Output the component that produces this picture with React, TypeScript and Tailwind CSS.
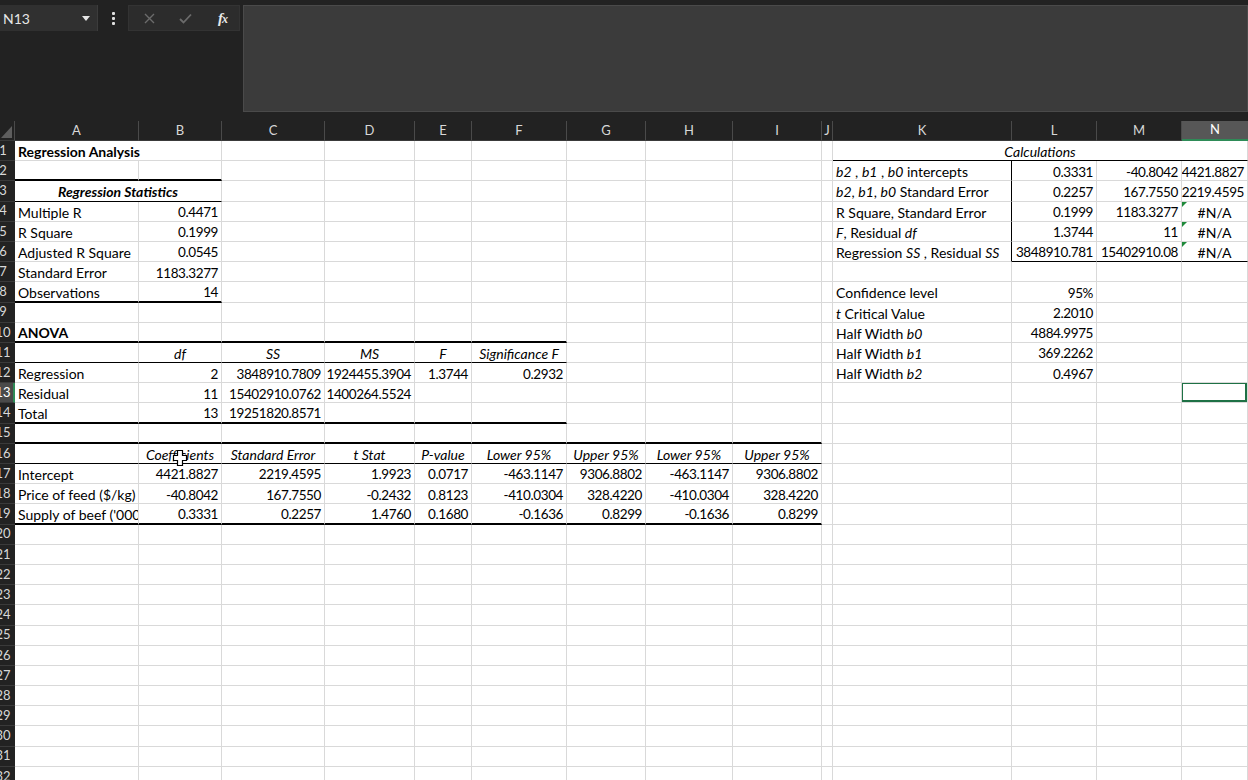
import { ReactNode } from 'react';

type Cell = {
  c: ReactNode;
  a?: 'l' | 'r' | 'c';
  span?: number;
  b?: boolean;
  i?: boolean;
  n?: boolean;
};

const COLS = [15, 124, 83, 103, 90, 57, 95, 79, 87, 89, 11, 179, 85, 85, 66];
const LETTERS = ['', 'A', 'B', 'C', 'D', 'E', 'F', 'G', 'H', 'I', 'J', 'K', 'L', 'M', 'N'];
const ROW_COUNT = 32;

const it = (s: string) => <i>{s}</i>;

const num = (c: string): Cell => ({ c, a: 'r', n: true });
const head = (c: string): Cell => ({ c, a: 'c', i: true });

// cells keyed "row-col" (col 1 = A)
const CELLS: Record<string, Cell> = {
  '1-1': { c: 'Regression Analysis', b: true, span: 2 },
  '3-1': { c: 'Regression Statistics', b: true, i: true, a: 'c', span: 2 },
  '4-1': { c: 'Multiple R' },
  '4-2': num('0.4471'),
  '5-1': { c: 'R Square' },
  '5-2': num('0.1999'),
  '6-1': { c: 'Adjusted R Square' },
  '6-2': num('0.0545'),
  '7-1': { c: 'Standard Error' },
  '7-2': num('1183.3277'),
  '8-1': { c: 'Observations' },
  '8-2': num('14'),
  '10-1': { c: 'ANOVA', b: true },
  '11-2': head('df'),
  '11-3': head('SS'),
  '11-4': head('MS'),
  '11-5': head('F'),
  '11-6': head('Significance F'),
  '12-1': { c: 'Regression' },
  '12-2': num('2'),
  '12-3': num('3848910.7809'),
  '12-4': num('1924455.3904'),
  '12-5': num('1.3744'),
  '12-6': num('0.2932'),
  '13-1': { c: 'Residual' },
  '13-2': num('11'),
  '13-3': num('15402910.0762'),
  '13-4': num('1400264.5524'),
  '14-1': { c: 'Total' },
  '14-2': num('13'),
  '14-3': num('19251820.8571'),
  '16-2': head('Coefficients'),
  '16-3': head('Standard Error'),
  '16-4': head('t Stat'),
  '16-5': head('P-value'),
  '16-6': head('Lower 95%'),
  '16-7': head('Upper 95%'),
  '16-8': head('Lower 95%'),
  '16-9': head('Upper 95%'),
  '17-1': { c: 'Intercept' },
  '17-2': num('4421.8827'),
  '17-3': num('2219.4595'),
  '17-4': num('1.9923'),
  '17-5': num('0.0717'),
  '17-6': num('-463.1147'),
  '17-7': num('9306.8802'),
  '17-8': num('-463.1147'),
  '17-9': num('9306.8802'),
  '18-1': { c: 'Price of feed ($/kg)' },
  '18-2': num('-40.8042'),
  '18-3': num('167.7550'),
  '18-4': num('-0.2432'),
  '18-5': num('0.8123'),
  '18-6': num('-410.0304'),
  '18-7': num('328.4220'),
  '18-8': num('-410.0304'),
  '18-9': num('328.4220'),
  '19-1': { c: "Supply of beef ('000" },
  '19-2': num('0.3331'),
  '19-3': num('0.2257'),
  '19-4': num('1.4760'),
  '19-5': num('0.1680'),
  '19-6': num('-0.1636'),
  '19-7': num('0.8299'),
  '19-8': num('-0.1636'),
  '19-9': num('0.8299'),

  '1-11': { c: 'Calculations', i: true, a: 'c', span: 4 },
  '2-11': { c: <>{it('b2')} , {it('b1')} , {it('b0')} intercepts</> },
  '2-12': num('0.3331'),
  '2-13': num('-40.8042'),
  '2-14': num('4421.8827'),
  '3-11': { c: <>{it('b2')}, {it('b1')}, {it('b0')} Standard Error</> },
  '3-12': num('0.2257'),
  '3-13': num('167.7550'),
  '3-14': num('2219.4595'),
  '4-11': { c: 'R Square, Standard Error' },
  '4-12': num('0.1999'),
  '4-13': num('1183.3277'),
  '4-14': { c: '#N/A', a: 'c' },
  '5-11': { c: <>{it('F')}, Residual {it('df')}</> },
  '5-12': num('1.3744'),
  '5-13': num('11'),
  '5-14': { c: '#N/A', a: 'c' },
  '6-11': { c: <>Regression {it('SS')} , Residual {it('SS')}</> },
  '6-12': num('3848910.781'),
  '6-13': num('15402910.08'),
  '6-14': { c: '#N/A', a: 'c' },
  '8-11': { c: 'Confidence level' },
  '8-12': num('95%'),
  '9-11': { c: <>{it('t')} Critical Value</> },
  '9-12': num('2.2010'),
  '10-11': { c: <>Half Width {it('b0')}</> },
  '10-12': num('4884.9975'),
  '11-11': { c: <>Half Width {it('b1')}</> },
  '11-12': num('369.2262'),
  '12-11': { c: <>Half Width {it('b2')}</> },
  '12-12': num('0.4967'),
};

const inRange = (c: number, a: number, b: number) => c >= a && c <= b;

function bottomClass(r: number, c: number) {
  const thick = 'border-b-2 border-b-black';
  const thin = 'border-b border-b-black';
  if ((r === 2 || r === 8) && inRange(c, 1, 2)) return thick;
  if (r === 3 && inRange(c, 1, 2)) return thin;
  if ((r === 10 || r === 14) && inRange(c, 1, 6)) return thick;
  if (r === 11 && inRange(c, 1, 6)) return thin;
  if ((r === 15 || r === 19) && inRange(c, 1, 9)) return thick;
  if (r === 16 && inRange(c, 1, 9)) return thin;
  if (r === 1 && inRange(c, 11, 14)) return thin;
  if (r === 6 && inRange(c, 12, 14)) return thin;
  return 'border-b border-b-[#d9d9d9]';
}

function rightClass(r: number, c: number) {
  if (c === 11 && inRange(r, 2, 6)) return 'border-r border-r-black';
  return 'border-r border-r-[#d9d9d9]';
}

function GridRow({ r }: { r: number }) {
  const out: ReactNode[] = [];
  const selectedRow = r === 13;
  out.push(
    <div
      key="h"
      className={`shrink-0 overflow-hidden h-full flex items-center border-b border-b-[#3a3a3a] ${
        selectedRow ? 'bg-[#4a4a4a] text-white border-r-2 border-r-[#2e8b57]' : 'bg-[#222222] text-[#d8d8d8]'
      }`}
      style={{ width: COLS[0] }}
    >
      <div className="w-[30px] -ml-[12px] shrink-0 text-center text-[13px]">{r}</div>
    </div>
  );
  let c = 1;
  while (c < COLS.length) {
    const cell = CELLS[`${r}-${c}`];
    const span = cell?.span ?? 1;
    let w = 0;
    for (let k = c; k < c + span; k++) w += COLS[k];
    const lastCol = c + span - 1;
    const align =
      cell?.a === 'r' ? 'justify-end pr-[3px]' : cell?.a === 'c' ? 'justify-center' : 'justify-start pl-[3px]';
    const isSel = r === 13 && c === 14;
    const hasTri = c === 14 && inRange(r, 4, 6);
    out.push(
      <div
        key={c}
        className={`relative shrink-0 h-full flex items-center overflow-hidden whitespace-nowrap bg-white text-black ${align} ${bottomClass(
          r,
          c
        )} ${rightClass(r, lastCol)} ${cell?.b ? 'font-bold' : ''} ${cell?.i ? 'italic' : ''}`}
        style={{ width: w }}
      >
        <span className={`pt-[2px] ${cell?.n ? 'text-[13.5px] tracking-[-0.4px]' : ''}`}>{cell?.c}</span>
        {hasTri && (
          <div className="absolute -top-[1px] left-0 w-0 h-0 border-t-[6px] border-t-[#1f8a3a] border-r-[6px] border-r-transparent" />
        )}
        {isSel && <div className="absolute -left-[1px] -top-[1px] right-0 bottom-0 border-2 border-[#1e7145]" />}
      </div>
    );
    c += span;
  }
  return <div className="flex h-[20.2px]">{out}</div>;
}

function MoveCursor() {
  return (
    <svg width="16" height="18" viewBox="0 0 16 18" className="absolute left-[172px] top-[449px]">
      <path
        d="M5.5 1.5h5v5h4v5h-4v5h-5v-5h-4v-5h4z"
        fill="white"
        stroke="black"
        strokeWidth="1.2"
        strokeLinejoin="miter"
      />
    </svg>
  );
}

export default function App() {
  return (
    <div
      className="relative w-[1248px] h-[780px] overflow-hidden bg-[#222222] text-[14px]"
      style={{ fontFamily: 'Lato, "Open Sans", sans-serif' }}
    >
      {/* formula bar */}
      <div className="flex items-start h-[121px] pt-[5px]">
        <div className="w-[98px] h-[26px] shrink-0 flex items-center justify-between bg-[#303030] border-r border-r-[#3c3c3c] pl-[3px] pr-[7px]">
          <span className="text-[14px] text-[#e6e6e6]">N13</span>
          <svg width="8" height="5" viewBox="0 0 8 5">
            <path d="M0 0h8L4 5z" fill="#e6e6e6" />
          </svg>
        </div>
        <div className="w-[30px] h-[26px] shrink-0 flex flex-col items-center justify-center gap-[2px]">
          <div className="w-[3px] h-[3px] rounded-[1px] bg-[#e0e0e0]" />
          <div className="w-[3px] h-[3px] rounded-[1px] bg-[#e0e0e0]" />
          <div className="w-[3px] h-[3px] rounded-[1px] bg-[#e0e0e0]" />
        </div>
        <div className="w-[112px] h-[26px] shrink-0 flex items-center bg-[#2c2c2c] border border-[#333333]">
          <div className="w-[36px] flex justify-center pl-[4px]">
            <svg width="11" height="11" viewBox="0 0 11 11">
              <path d="M1 1l9 9M10 1l-9 9" stroke="#6b6b6b" strokeWidth="1.4" />
            </svg>
          </div>
          <div className="w-[36px] flex justify-center pl-[4px]">
            <svg width="13" height="11" viewBox="0 0 13 11">
              <path d="M1 6l3.5 3.5L12 1.5" stroke="#6b6b6b" strokeWidth="1.8" fill="none" />
            </svg>
          </div>
          <div
            className="w-[38px] flex items-baseline justify-center pl-[6px] italic font-bold text-[#e8e8e8] leading-none"
            style={{ fontFamily: '"Liberation Serif", serif' }}
          >
            <span className="text-[15px]">f</span>
            <span className="text-[12px] -ml-[1px]">x</span>
          </div>
        </div>
        <div className="ml-[3px] flex-1 h-[107px] bg-[#3b3b3b] border border-[#4a4a4a]" />
      </div>

      {/* column headers */}
      <div className="flex h-[20px] bg-[#222222] text-[13px] text-[#d8d8d8]">
        {COLS.map((w, i) => (
          <div
            key={i}
            className={`relative shrink-0 h-full flex items-center justify-center ${
              i === 14
                ? 'bg-[#575757] text-white border-b-2 border-b-[#2e8b57]'
                : 'border-r border-r-[#4a4a4a] border-b border-b-[#3a3a3a]'
            }`}
            style={{ width: w }}
          >
            {i === 0 ? (
              <svg width="11" height="12" viewBox="0 0 11 12" className="mt-[2px] -ml-[1px]">
                <path d="M11 0v12H0z" fill="#5e5e5e" />
              </svg>
            ) : (
              LETTERS[i]
            )}
          </div>
        ))}
      </div>

      {/* grid */}
      <div className="flex flex-col">
        {Array.from({ length: ROW_COUNT }, (_, k) => (
          <GridRow key={k} r={k + 1} />
        ))}
      </div>

      <MoveCursor />
    </div>
  );
}
